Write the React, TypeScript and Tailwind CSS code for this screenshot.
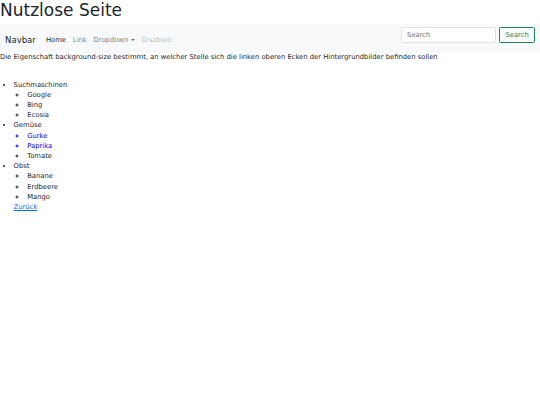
const suchmaschinen = ["Google", "Bing", "Ecosia"];
const obst = ["Banane", "Erdbeere", "Mango"];

function Navbar() {
  return (
    <nav className="flex h-[28.5px] items-start justify-between bg-[#f8f9fa] px-[5.1px]">
      <div className="mt-[7.6px] flex items-center">
        <a className="mr-[6.8px] py-[2.1px] text-[8.5px] leading-[12.75px] text-[rgba(0,0,0,0.9)]">
          Navbar
        </a>
        <ul className="flex items-center text-[6.8px] leading-[10.2px]">
          <li>
            <a className="block px-[3.4px] py-[3.4px] text-[rgba(0,0,0,0.9)]">Home</a>
          </li>
          <li>
            <a className="block px-[3.4px] py-[3.4px] text-[rgba(0,0,0,0.55)]">Link</a>
          </li>
          <li>
            <a className="flex items-center px-[3.4px] py-[3.4px] text-[rgba(0,0,0,0.55)]">
              Dropdown
              <span className="ml-[2.5px] inline-block border-x-[2px] border-t-[2px] border-x-transparent border-t-[rgba(0,0,0,0.55)]" />
            </a>
          </li>
          <li>
            <a className="block px-[3.4px] py-[3.4px] text-[rgba(0,0,0,0.3)]">Disabled</a>
          </li>
        </ul>
      </div>
      <form className="mt-[3.2px] flex items-center">
        <input
          type="search"
          placeholder="Search"
          className="mr-[3.4px] h-[16px] w-[95px] rounded-[1.6px] border-[0.6px] border-[#dee2e6] bg-white px-[5.1px] text-[6.8px] leading-[10.2px] text-[#212529] outline-none placeholder:text-[#6c757d]"
        />
        <button
          type="button"
          className="h-[16px] rounded-[1.6px] border-[0.6px] border-[#198754] px-[5.1px] text-[6.8px] leading-[10.2px] text-[#198754]"
        >
          Search
        </button>
      </form>
    </nav>
  );
}

export default function App() {
  return (
    <div className="min-h-[405px] bg-white font-['DejaVu_Sans',sans-serif] text-[6.8px] leading-[10.2px] text-[#212529]">
      <h1 className="mb-[3.4px] text-[17px] leading-[20.4px] font-normal">Nutzlose Seite</h1>
      <Navbar />
      <p>
        Die Eigenschaft background-size bestimmt, an welcher Stelle sich die linken oberen Ecken der
        Hintergrundbilder befinden sollen
      </p>
      <ul className="mt-[17px] list-disc pl-[13.6px]">
        <li>
          Suchmaschinen
          <ul className="pl-[13.6px] [list-style-type:circle]">
            {suchmaschinen.map((s) => (
              <li key={s}>{s}</li>
            ))}
          </ul>
        </li>
        <li>
          Gemüse
          <ul className="pl-[13.6px] [list-style-type:circle]">
            <li className="text-[#0000ff]">Gurke</li>
            <li className="text-[#0000ff]">Paprika</li>
            <li>Tomate</li>
          </ul>
        </li>
        <li>
          Obst
          <ul className="pl-[13.6px] [list-style-type:circle]">
            {obst.map((o) => (
              <li key={o}>{o}</li>
            ))}
          </ul>
        </li>
        <li className="list-none">
          <a href="#" className="text-[#0d6efd] underline">
            Zurück
          </a>
        </li>
      </ul>
    </div>
  );
}
